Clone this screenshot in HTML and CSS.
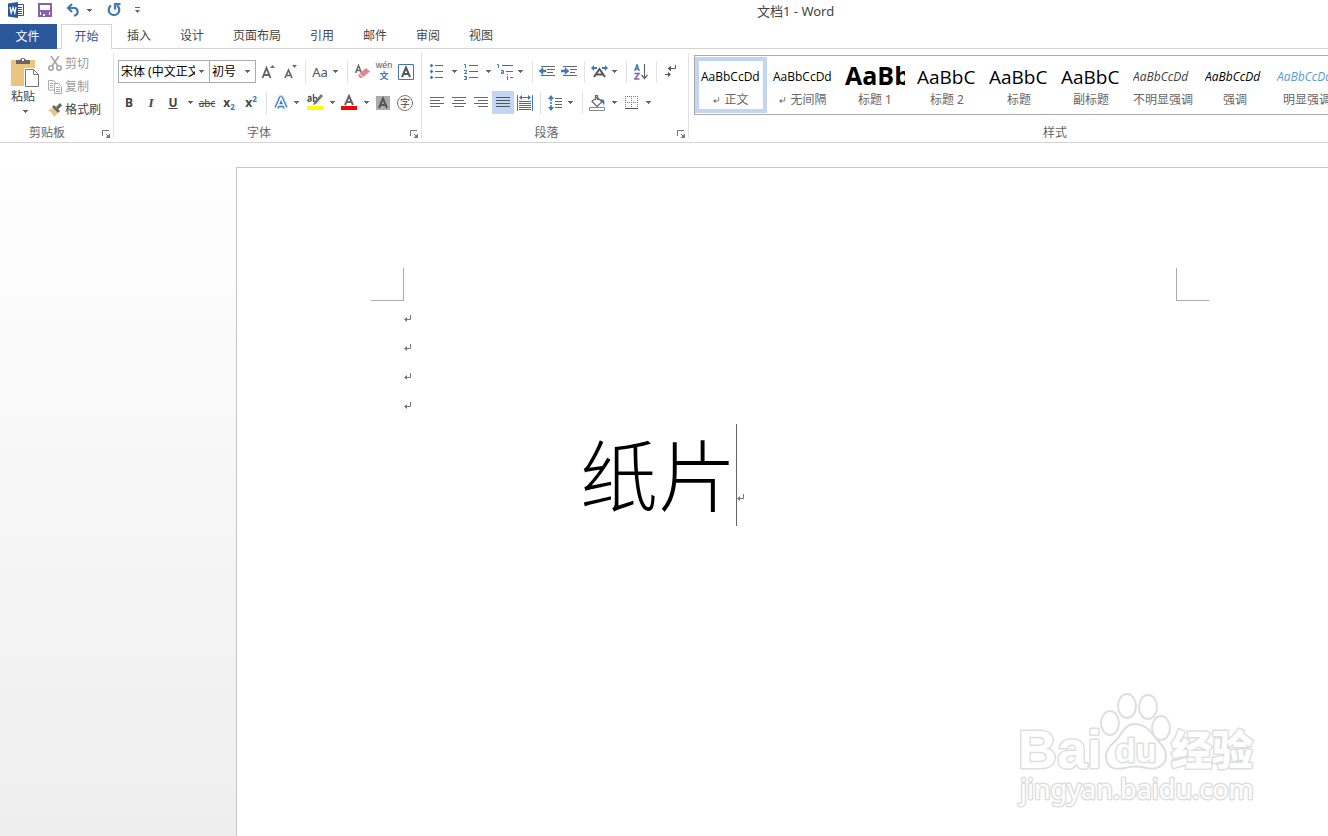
FILE: index.html
```html
<!DOCTYPE html>
<html lang="zh-CN">
<head>
<meta charset="utf-8">
<title>文档1 - Word</title>
<link rel="stylesheet" href="styles.css">
</head>
<body>
<svg class="defs" aria-hidden="true">
  <symbol id="arrow" viewBox="0 0 5 3"><path d="M0 0h5v1H4v1H3v1H2V2H1V1H0z" fill="#666"/></symbol>
  <symbol id="launch" viewBox="0 0 8 8"><path d="M.5 6V.5H7M4 4l3 3" fill="none" stroke="#777"/><path d="M8 3.500V8H3.500z" fill="#777"/></symbol>
  <symbol id="enter" viewBox="0 0 8 8"><path d="M6.500 0v4.500H2" fill="none" stroke="#777"/><path d="M0 4.500L3 2v5z" fill="#777"/></symbol>
</svg>
<div class="app">
  <header class="titlebar">
    <div class="quick">
      <svg width="16" height="16" viewBox="0 0 16 16"><path d="M9 2.500h6.500v11H9" fill="#fff" stroke="#2b579a"/><path d="M10 5.500h4M10 7.500h4M10 9.500h4M10 11.500h4" stroke="#2b579a"/><path d="M0 1.500L10 0v16L0 14.500z" fill="#2b579a"/><path d="M2 5l1.200 6L5 5.500 6.800 11 8 5" fill="none" stroke="#fff" stroke-width="1.300"/></svg>
      <button class="qbtn save" aria-label="保存"><svg width="14" height="14" viewBox="0 0 14 14"><path d="M1 1h12v12H1z" fill="#fff" stroke="#8a5fb0" stroke-width="2"/><path d="M2 7h10v2H2zM3 9h8v5H3z" fill="#8a5fb0"/><path d="M5 11h2v2H5z" fill="#fff"/></svg></button>
      <button class="qbtn undo" aria-label="撤消"><svg width="15" height="14" viewBox="0 0 15 14"><path d="M2 5h7a4 4 0 0 1 0 7.500H8M6 1L2 5l4 4" fill="none" stroke="#3f78b5" stroke-width="2.200"/></svg><svg width="5" height="3"><use href="#arrow"/></svg></button>
      <button class="qbtn redo" aria-label="重复"><svg width="14" height="14" viewBox="0 0 14 14"><path d="M4 2.500A5.300 5.300 0 1 0 10 2.500" fill="none" stroke="#3f78b5" stroke-width="2.200"/><path d="M8 6.500V1.200h5.500" fill="none" stroke="#3f78b5" stroke-width="2.200"/></svg></button>
      <button class="qbtn more" aria-label="自定义快速访问工具栏"><svg width="5" height="6" viewBox="0 0 5 6"><path d="M0 .5h5" stroke="#666"/><path d="M0 3h5L2.500 6z" fill="#666"/></svg></button>
    </div>
    <h1 class="doctitle">文档1 - Word</h1>
  </header>
  <nav class="tabs">
    <button class="file">文件</button>
    <button class="tab active">开始</button>
    <button class="tab">插入</button>
    <button class="tab">设计</button>
    <button class="tab">页面布局</button>
    <button class="tab">引用</button>
    <button class="tab">邮件</button>
    <button class="tab">审阅</button>
    <button class="tab">视图</button>
  </nav>
  <section class="ribbon">
    <div class="group clipboard">
      <div class="clip">
        <button class="paste">
          <svg width="28" height="31" viewBox="0 0 28 31"><path d="M0 3h24v26H0z" fill="#ecc57c"/><path d="M5 7V3h4a3.200 3.200 0 0 1 6 0h4v4z" fill="#666"/><path d="M11 2h2v2h-2z" fill="#fff"/><path d="M13 11h11v19H13z" fill="#fff"/><path d="M14.500 12.500h8l5 5v12h-13z" fill="#fff" stroke="#777"/><path d="M22.500 12.500v5h5" fill="none" stroke="#777"/></svg>
          <span>粘贴</span>
          <svg width="5" height="3"><use href="#arrow"/></svg>
        </button>
        <div class="cliplist">
          <button class="off"><svg width="14" height="15" viewBox="0 0 14 15"><g fill="none" stroke="#a6a6a6" stroke-width="1.600"><path d="M3 0l7 10M11 0L4 10"/><circle cx="3" cy="12" r="2.200"/><circle cx="11" cy="12" r="2.200"/></g></svg>剪切</button>
          <button class="off"><svg width="14" height="14" viewBox="0 0 14 14"><g fill="#fff" stroke="#aaa"><path d="M.5.5h5l2 2v7.500h-7z"/><path d="M6.500 3.500h4l3 3v7h-7z"/><path d="M2 3.500h3M2 5.500h3M2 7.500h3M8 7.500h4M8 9.500h4M8 11.500h4"/></g></svg>复制</button>
          <button><svg width="14" height="14" viewBox="0 0 14 14"><path d="M0 7l5-2 5 5-4 4c-1-3-3-5-6-7z" fill="#ecc57c"/><path d="M4 4l2-2 6 6-2 2z" fill="#666"/><path d="M8 4l4-4 2 2.500-4 4z" fill="#666"/></svg>格式刷</button>
        </div>
      </div>
      <div class="caption">剪贴板<button class="launch" aria-label="剪贴板选项"><svg width="8" height="8"><use href="#launch"/></svg></button></div>
    </div>

    <div class="group font">
      <div class="row">
        <label class="combo family"><select aria-label="字体"><option>宋体 (中文正文)</option></select><svg width="5" height="3"><use href="#arrow"/></svg></label>
        <label class="combo size"><select aria-label="字号"><option>初号</option></select><svg width="5" height="3"><use href="#arrow"/></svg></label>
        <button class="ic" aria-label="增大字号"><svg width="14" height="14" viewBox="0 0 14 14"><path d="M1.500 13l4-10 4 10M3 10h5" fill="none" stroke="#666" stroke-width="1.900"/><path d="M9 3l2.500-3L14 3z" fill="#3f78b5"/></svg></button>
        <button class="ic" aria-label="减小字号"><svg width="14" height="14" viewBox="0 0 14 14"><path d="M2 13l3.500-8L9 13M3.500 10.500h4" fill="none" stroke="#666" stroke-width="1.700"/><path d="M9 0h5l-2.500 3z" fill="#3f78b5"/></svg></button>
        <i class="sep"></i>
        <button class="split tight" aria-label="更改大小写"><span class="aa">Aa</span><svg width="5" height="3"><use href="#arrow"/></svg></button>
        <i class="sep"></i>
        <button class="ic" aria-label="清除格式"><svg width="16" height="16" viewBox="0 0 16 16"><path d="M1.500 9l3-7.500 3 7.500M2.500 6.500h4" fill="none" stroke="#666" stroke-width="1.500"/><path d="M4 11l8-7 4 3.500L8 14H6z" fill="#e5838f"/><path d="M5 9.500l4 4" stroke="#fff"/></svg></button>
        <button class="ic pinyin" aria-label="拼音指南"><span>wén</span><b>文</b></button>
        <button class="ic" aria-label="字符边框"><svg width="16" height="16" viewBox="0 0 16 16"><path d="M.5.5h15v15H.5z" fill="#fff" stroke="#3f78b5"/><path d="M4 13L8 3.500 12 13M5.500 10h5" fill="none" stroke="#555" stroke-width="2"/></svg></button>
      </div>
      <div class="row">
        <button class="ic bold">B</button>
        <button class="ic italic">I</button>
        <button class="split under"><u>U</u><svg width="5" height="3"><use href="#arrow"/></svg></button>
        <button class="ic strike"><s>abc</s></button>
        <button class="ic script">x<sub>2</sub></button>
        <button class="ic script">x<sup>2</sup></button>
        <i class="sep"></i>
        <button class="split tight" aria-label="文本效果"><svg class="pic" width="16" height="16" viewBox="0 0 16 16"><path d="M3.500 13L8 3l4.500 10M5 10h6" fill="none" stroke="#c3daf1" stroke-width="6" stroke-linejoin="round"/><path d="M3.500 13L8 3l4.500 10M5 10h6" fill="none" stroke="#3f78b5" stroke-width="4" stroke-linejoin="round"/><path d="M3.500 13L8 3l4.500 10M5 10h6" fill="none" stroke="#fff" stroke-width="1.700"/></svg><svg width="5" height="3"><use href="#arrow"/></svg></button>
        <button class="split hl" aria-label="突出显示"><svg class="pic" width="17" height="17" viewBox="0 0 17 17"><path d="M1 3q3-1.500 3 1v3.500M4 5Q1 4.500 1 6.500t3 0M6.500 0v8M6.500 4q3.500-1.500 3.500 1.500T6.500 7" fill="none" stroke="#555" stroke-width="1.400"/><path d="M14 0l2 2-7 8-3 1 1-3z" fill="#777"/><path d="M0 12h16v4H0z" fill="#ff0"/></svg><svg width="5" height="3"><use href="#arrow"/></svg></button>
        <button class="split" aria-label="字体颜色"><svg class="pic" width="16" height="17" viewBox="0 0 16 17"><path d="M4 11l4-9 4 9M5.500 8h5" fill="none" stroke="#666" stroke-width="2"/><path d="M0 12h16v4H0z" fill="red"/></svg><svg width="5" height="3"><use href="#arrow"/></svg></button>
        <button class="ic" aria-label="字符底纹"><svg width="14" height="14" viewBox="0 0 14 14"><path d="M0 0h14v14H0z" fill="#ababab"/><path d="M3 12l4-9.500L11 12M4.500 9h5" fill="none" stroke="#555" stroke-width="2"/></svg></button>
        <button class="ic" aria-label="带圈字符"><span class="ring">字</span></button>
      </div>
      <div class="caption">字体<button class="launch" aria-label="字体选项"><svg width="8" height="8"><use href="#launch"/></svg></button></div>
    </div>

    <div class="group para">
      <div class="row">
        <button class="split" aria-label="项目符号"><svg class="pic" width="14" height="15" viewBox="0 0 14 15"><path d="M0 1h3v1H0zM1 0h1v3H1zM0 7h3v1H0zM1 6h1v3H1zM0 13h3v1H0zM1 12h1v3H1z" fill="#3f78b5" stroke="#3f78b5" stroke-width=".4"/><path d="M5 1.500h8M5 7.500h8M5 13.500h8" stroke="#666"/></svg><svg width="5" height="3"><use href="#arrow"/></svg></button>
        <button class="split" aria-label="编号"><svg class="pic" width="15" height="16" viewBox="0 0 15 16"><path d="M0 .5h1.500V4M0 6.500h2.500v1.300L.5 9.500H3M0 12.500h2.500v3H0M1 14h1.500" fill="none" stroke="#3f78b5"/><path d="M5 1.500h9M5 7.500h9M5 13.500h9" stroke="#666"/></svg><svg width="5" height="3"><use href="#arrow"/></svg></button>
        <button class="split tight" aria-label="多级列表"><svg class="pic" width="17" height="16" viewBox="0 0 17 16"><path d="M0 .5h1.500V4M4 6.500h2.500v3H4.500V8H6M10.500 10v1M10.500 12v4" fill="none" stroke="#3f78b5"/><path d="M5 1.500h11M9 7.500h7M13 13.500h3" stroke="#666"/></svg><svg width="5" height="3"><use href="#arrow"/></svg></button>
        <i class="sep"></i>
        <button class="ic" aria-label="减少缩进量"><svg width="16" height="11" viewBox="0 0 16 11"><path d="M2 .5h14M8 3.500h8M8 6.500h6M2 9.500h14" stroke="#666"/><path d="M0 5l4-3.500V4h3v2H4v2.500z" fill="#3f78b5" stroke="#3f78b5" stroke-width=".5"/></svg></button>
        <button class="ic" aria-label="增加缩进量"><svg width="16" height="11" viewBox="0 0 16 11"><path d="M2 .5h14M9 3.500h7M9 6.500h5M2 9.500h14" stroke="#666"/><path d="M8 5L4 1.500V4H0v2h4v2.500z" fill="#3f78b5" stroke="#3f78b5" stroke-width=".5"/></svg></button>
        <i class="sep"></i>
        <button class="split tight" aria-label="中文版式"><svg class="pic" width="17" height="13" viewBox="0 0 17 13"><path d="M3 12l5.500-8 5.500 8M5.500 9.500h6" fill="none" stroke="#555" stroke-width="2"/><path d="M0 3l3-3v2h3v2H3v2zM17 3l-3-3v2h-3v2h3v2z" fill="#3f78b5"/></svg><svg width="5" height="3"><use href="#arrow"/></svg></button>
        <i class="sep"></i>
        <button class="ic" aria-label="排序"><svg width="14" height="16" viewBox="0 0 14 16"><path d="M.7 7L3 .8 5.300 7M1.500 5h3" fill="none" stroke="#3f78b5" stroke-width="1.400"/><path d="M.5 9.500H5L.8 15H5.500" fill="none" stroke="#8a5fb0" stroke-width="1.500"/><path d="M10.500 0v14M7.500 11l3 3.500 3-3.500" fill="none" stroke="#666" stroke-width="1.200"/></svg></button>
        <i class="sep"></i>
        <button class="ic" aria-label="显示编辑标记"><svg width="12" height="13" viewBox="0 0 12 13"><path d="M10.500 0v3.500H5" fill="none" stroke="#555"/><path d="M2.500 3.500L6 .8v5.500zM6 9.500L3 6.800V12z" fill="#555"/><path d="M0 9.500h4" stroke="#555"/></svg></button>
      </div>
      <div class="row">
        <button class="ic" aria-label="左对齐"><svg width="14" height="11" viewBox="0 0 14 11"><path d="M0 .5h14M0 3.500h10M0 6.500h14M0 9.500h10" stroke="#666"/></svg></button>
        <button class="ic" aria-label="居中"><svg width="14" height="11" viewBox="0 0 14 11"><path d="M0 .5h14M2 3.500h10M0 6.500h14M2 9.500h10" stroke="#666"/></svg></button>
        <button class="ic" aria-label="右对齐"><svg width="14" height="11" viewBox="0 0 14 11"><path d="M0 .5h14M4 3.500h10M0 6.500h14M4 9.500h10" stroke="#666"/></svg></button>
        <button class="ic on" aria-label="两端对齐"><svg width="14" height="11" viewBox="0 0 14 11"><path d="M0 .5h14M0 3.500h14M0 6.500h14M0 9.500h14" stroke="#555"/></svg></button>
        <button class="ic" aria-label="分散对齐"><svg width="16" height="16" viewBox="0 0 16 16"><path d="M.5 0v16M15.500 0v16M4 2.500h8" stroke="#3f78b5"/><path d="M2 2.500L5 0v5zM14 2.500L11 0v5z" fill="#3f78b5"/><path d="M2 6.500h12M2 8.500h12M2 10.500h12M2 12.500h12M2 14.500h12" stroke="#666"/></svg></button>
        <i class="sep"></i>
        <button class="split tight" aria-label="行距"><svg class="pic" width="15" height="16" viewBox="0 0 15 16"><path d="M3 3v3M3 7v2M3 10v3" stroke="#3f78b5" stroke-width="1.600"/><path d="M0 4l3-4 3 4zM0 12l3 4 3-4z" fill="#3f78b5"/><path d="M7 3.500h7M7 6.500h7M7 9.500h7M7 12.500h7" stroke="#666"/></svg><svg width="5" height="3"><use href="#arrow"/></svg></button>
        <i class="sep"></i>
        <button class="split" aria-label="底纹"><svg class="pic" width="17" height="16" viewBox="0 0 17 16"><path d="M3 6.500L8 2l5 5-5 4.500zM6.500 5V.5h2V5" fill="#fff" stroke="#666" stroke-width="1.200"/><path d="M11 4.500c5-1 5 3 4 6-1-3-2-3-3-4z" fill="#3f78b5"/><path d="M.5 12.500h15v3H.5z" fill="#fff" stroke="#888"/></svg><svg width="5" height="3"><use href="#arrow"/></svg></button>
        <button class="split" aria-label="边框"><svg class="pic" width="13" height="13" viewBox="0 0 13 13"><path d="M0 .5h13M0 6.500h13M.5 0v12M6.500 0v12M12.500 0v12" stroke="#777" stroke-dasharray="1 1"/><path d="M0 12.500h13" stroke="#555"/></svg><svg width="5" height="3"><use href="#arrow"/></svg></button>
      </div>
      <div class="caption">段落<button class="launch" aria-label="段落选项"><svg width="8" height="8"><use href="#launch"/></svg></button></div>
    </div>

    <div class="group styles">
      <div class="gallery">
        <button class="style chosen"><span class="sample">AaBbCcDd</span><span class="name"><svg width="7" height="7"><use href="#enter"/></svg>正文</span></button>
        <button class="style"><span class="sample">AaBbCcDd</span><span class="name"><svg width="7" height="7"><use href="#enter"/></svg>无间隔</span></button>
        <button class="style"><span class="sample h1">AaBb</span><span class="name">标题 1</span></button>
        <button class="style"><span class="sample h2">AaBbC</span><span class="name">标题 2</span></button>
        <button class="style"><span class="sample h2">AaBbC</span><span class="name">标题</span></button>
        <button class="style"><span class="sample h2">AaBbC</span><span class="name">副标题</span></button>
        <button class="style"><span class="sample em soft">AaBbCcDd</span><span class="name">不明显强调</span></button>
        <button class="style"><span class="sample em">AaBbCcDd</span><span class="name">强调</span></button>
        <button class="style"><span class="sample em blue">AaBbCcDd</span><span class="name">明显强调</span></button>
      </div>
      <div class="caption">样式</div>
    </div>
  </section>

  <main class="workspace">
    <article class="page">
      <div class="marks"><i class="mark left"></i><i class="mark right"></i></div>
      <div class="text">
        <p><svg width="8" height="8"><use href="#enter"/></svg></p>
        <p><svg width="8" height="8"><use href="#enter"/></svg></p>
        <p><svg width="8" height="8"><use href="#enter"/></svg></p>
        <p><svg width="8" height="8"><use href="#enter"/></svg></p>
        <p class="big"><span>纸片</span><i class="caret"></i><svg width="8" height="8"><use href="#enter"/></svg></p>
      </div>
    </article>
    <svg class="brand" width="250" height="124" viewBox="0 0 250 124">
      <g class="ink">
        <ellipse cx="99" cy="34" rx="9" ry="12"/><ellipse cx="116" cy="17" rx="9" ry="12"/><ellipse cx="137" cy="18" rx="9" ry="12"/><ellipse cx="150" cy="39" rx="9" ry="12"/>
        <path d="M124 35c-9 0-12 7-17 14-6 7-13 11-12 20 1 11 11 12 19 10 8-2 14-2 21 0 9 2 19-1 20-11 0-10-6-13-11-20-5-6-10-13-20-13z"/>
        <text x="7" y="79" class="bai">Bai</text>
        <text x="104" y="73" class="du">du</text>
        <text x="160" y="76" class="cn">经验</text>
        <text x="9" y="110" class="url">jingyan.baidu.com</text>
      </g>
    </svg>
  </main>
</div>
</body>
</html>
```
FILE: styles.css
```css
* { box-sizing: border-box; }
body { margin: 0; font: 12px/16px "Noto Sans", "Noto Sans CJK SC", sans-serif; color: #444; }
button { border: 0; padding: 0; margin: 0; background: none; font: inherit; color: inherit; flex: none; }
svg { display: block; flex: none; }
.defs { position: absolute; width: 0; height: 0; }
.app { display: flex; flex-direction: column; min-height: 100vh; overflow: hidden; background: #fff; }

.titlebar { display: flex; height: 24px; padding-left: 8px; }
.quick { display: flex; align-items: center; height: 20px; width: 749px; }
.qbtn { display: flex; align-items: center; gap: 6px; }
.save { margin-left: 14px; }
.undo { margin-left: 14px; }
.redo { margin-left: 15px; }
.more { margin-left: 14px; }
.doctitle { margin: 0; font-size: 13px; font-weight: 400; line-height: 22px; }

.tabs { display: flex; height: 25px; border-bottom: 1px solid #d4d4d4; }
.tabs button { height: 24px; line-height: 24px; }
.tabs .file { width: 57px; height: 25px; margin-right: 4px; padding-right: 2px; background: #2b579a; color: #fff; }
.tabs .tab { padding: 0 14px; margin-left: 1px; }
.tabs .active { height: 25px; width: 51px; margin-left: 0; padding: 0; border: 1px solid #d4d4d4; border-bottom: 0; background: #fff; color: #2b579a; line-height: 22px; }

.ribbon { display: flex; height: 94px; border-bottom: 1px solid #d4d4d4; }
.group { display: flex; flex-direction: column; flex: none; position: relative; padding: 11px 0 0 4px; }
.group::after { content: ""; position: absolute; right: 0; top: 4px; bottom: 4px; width: 1px; background: #e1e1e1; }
.clipboard { width: 114px; padding: 3px 0 0; }
.font { width: 308px; }
.para { width: 267px; }
.styles { width: 732px; padding: 6px 0 0 5px; }
.row { display: flex; align-items: center; height: 23px; margin-bottom: 8px; }
.row:nth-child(2) { margin: 0; }
.caption { position: absolute; left: 0; right: 0; bottom: 0; text-align: center; color: #666; line-height: 18px; }
.clipboard .caption { padding-right: 20px; }
.font .caption, .para .caption { padding-right: 18px; }
.launch { position: absolute; right: 4px; bottom: 4px; }

.ic { display: flex; align-items: center; justify-content: center; width: 22px; height: 23px; }
.on { background: #c2d5f2; }
.split { display: grid; grid-template-columns: 22px 12px; align-items: center; justify-items: center; height: 23px; }
.tight > :last-child { justify-self: start; margin-left: 2px; }
.sep { flex: none; width: 1px; height: 22px; margin: 0 3px 0 4px; background: #e1e1e1; }
.combo { display: flex; align-items: center; position: relative; height: 23px; border: 1px solid #ababab; background: #fff; }
.combo select { appearance: none; width: 100%; height: 21px; padding: 0 14px 0 2px; border: 0; background: none; font: inherit; color: #000; }
.combo svg { position: absolute; right: 5px; }
.family { width: 92px; }
.size { width: 47px; margin-right: 1px; margin-left: -1px; }
.aa { font-size: 13px; color: #555; }
.pinyin { flex-direction: column; color: #555; font: 9px/9px "Liberation Sans", "Noto Sans CJK SC", sans-serif; }
.pinyin b { color: #3f78b5; font-weight: 700; font-size: 9px; line-height: 12px; }
.bold { font-weight: 700; }
.italic { font: italic 700 13px/16px "Liberation Serif", serif; }
.under { font-weight: 700; }
.strike { font-size: 10px; }
.script { font-weight: 700; font-size: 12px; }
.script sub, .script sup { font-size: 8px; line-height: 8px; color: #3f78b5; }
.script sub { align-self: center; padding-top: 8px; }
.script sup { align-self: center; padding-bottom: 8px; }
.ring { width: 16px; height: 16px; border: 1px solid #777; border-radius: 50%; font-size: 10px; line-height: 14px; text-align: center; }

.clip { display: flex; height: 69px; }
.paste { display: flex; flex-direction: column; align-items: center; width: 46px; padding: 5px 0 0 4px; }
.paste span { padding: 1px 4px 5px 0; }
.cliplist { display: flex; flex-direction: column; padding-left: 2px; }
.cliplist button { display: flex; align-items: center; gap: 3px; height: 23px; }
.cliplist .off { color: #999; }

.gallery { display: flex; height: 60px; border: 1px solid #ababab; padding-top: 1px; }
.style { display: flex; flex-direction: column; align-items: center; width: 72px; height: 56px; border: 4px solid transparent; }
.chosen { border-color: #c2d5f2; }
.sample { width: 60px; height: 31px; overflow: hidden; white-space: nowrap; text-align: left; font: 12px/32px "Open Sans", sans-serif; color: #000; }
.h1 { font-size: 25px; font-weight: 700; line-height: 28px; }
.h2 { font-size: 19px; line-height: 32px; }
.em { font-style: italic; }
.soft { color: #404040; }
.blue { color: #5b9bd5; }
.name { display: flex; align-items: center; gap: 4px; white-space: nowrap; color: #666; line-height: 18px; }

.workspace { flex: 1; position: relative; padding: 24px 0 0 236px; background: linear-gradient(#fff, #eee); }
.page { width: 1107px; height: 100%; min-height: 669px; padding-top: 100px; border: 1px solid #c6c6c6; border-bottom: 0; background: #fff; }
.marks { display: flex; justify-content: space-between; width: 838px; height: 33px; margin-left: 134px; }
.mark { width: 33px; height: 33px; border: 0 solid #ababab; }
.left { border-width: 0 1px 1px 0; }
.right { border-width: 0 0 1px 1px; }
.text { padding: 3px 0 0 167px; }
.text p { display: flex; align-items: center; height: 29px; margin: 0; }
.text .big { height: 110px; padding-left: 176px; font: 300 78px/102px "Noto Sans CJK SC", sans-serif; color: #000; }
.big span { padding-bottom: 6px; }
.caret { width: 1px; height: 102px; background: #666; }
.big svg { margin-top: 46px; }

.brand { position: absolute; left: 1011px; top: 546px; }
.ink { fill: #fff; stroke: #dedede; stroke-width: 2px; stroke-linejoin: round; font-family: "Liberation Sans", "Noto Sans CJK SC", sans-serif; }
.ink text { paint-order: stroke; stroke-width: 3px; }
.ink .bai { font-size: 54px; font-weight: 700; }
.ink .du { font-size: 34px; font-weight: 700; }
.ink .cn { font-size: 41px; font-weight: 900; }
.ink .url { font-family: "Noto Sans", sans-serif; font-size: 27px; }
```
